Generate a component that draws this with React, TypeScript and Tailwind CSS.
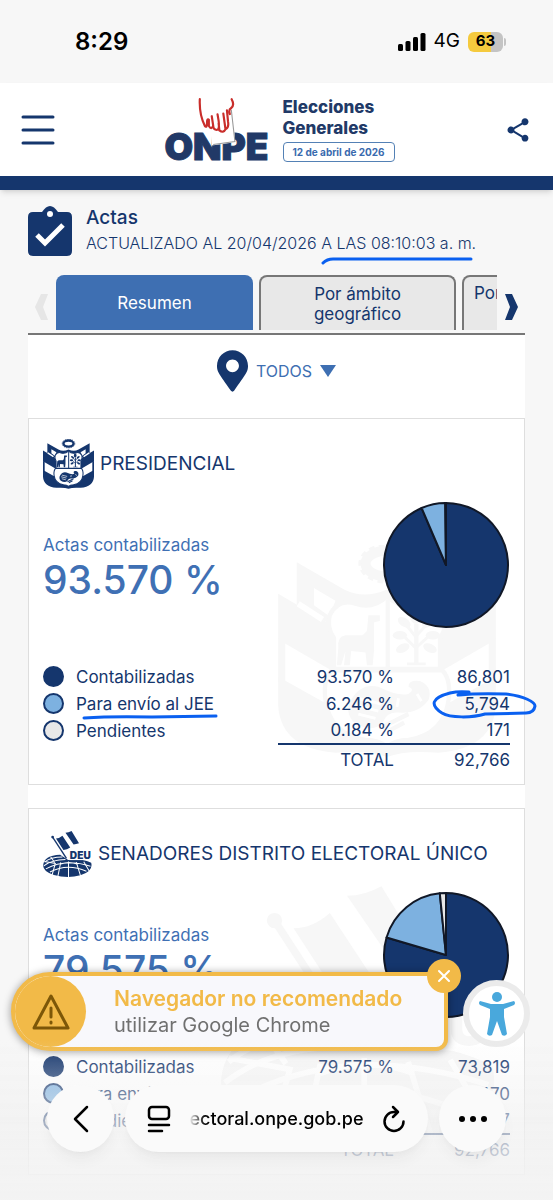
import { FaMapMarkerAlt } from "react-icons/fa";
import { MdShare } from "react-icons/md";

type Row = { label: string; percent: string; count: string; value: number; color: string };

const COLORS = { navy: "#15366d", sky: "#7db1e0", gray: "#e8e8e8" };

const PRESIDENCIAL: Row[] = [
    { label: "Contabilizadas", percent: "93.570 %", count: "86,801", value: 93.57, color: COLORS.navy },
    { label: "Para envío al JEE", percent: "6.246 %", count: "5,794", value: 6.246, color: COLORS.sky },
    { label: "Pendientes", percent: "0.184 %", count: "171", value: 0.184, color: COLORS.gray },
];

const SENADORES: Row[] = [
    { label: "Contabilizadas", percent: "79.575 %", count: "73,819", value: 79.575, color: COLORS.navy },
    { label: "Para envío al JEE", percent: "18.833 %", count: "17,470", value: 18.833, color: COLORS.sky },
    { label: "Pendientes", percent: "1.592 %", count: "1,477", value: 1.592, color: COLORS.gray },
];

const Crest = ({ className }: { className?: string }) => (
    <svg viewBox="0 0 152 148" className={className} fill="currentColor" aria-hidden="true">
        {/* Wreath */}
        <ellipse cx="76" cy="13" rx="15" ry="9" fill="none" stroke="currentColor" strokeWidth="7" />
        <ellipse cx="76" cy="13" rx="19" ry="13" fill="none" stroke="currentColor" strokeWidth="2" strokeDasharray="4 3" />
        {/* Flags */}
        <path d="M13 12 L46 31 Q60 38 76 31 Q92 38 106 31 L139 12 V42 L118 54 L34 54 L13 42Z" />
        <path d="M0 34 L34 54 Q42 64 38 88 L0 66Z M152 34 L118 54 Q110 64 114 88 L152 66Z" />
        <path d="M0 92 L36 112 V96 L76 134 L116 96 V112 L152 92 V112 Q150 142 112 145 Q88 143 76 148 Q64 143 40 145 Q2 142 0 112Z" />
        <path d="M0 64 L5 68 V96 H0Z M152 64 L147 68 V96 H152Z" />
        <path d="M14 41 L31 52 M138 41 L121 52" stroke="#fff" strokeWidth="4" />
        <path d="M25 30 L40 39 L36 50 L25 42Z M127 30 L112 39 L116 50 L127 42Z" fill="#fff" />
        {/* Shield */}
        <path
            d="M36 49 Q42 37 54 41 Q66 45 76 36 Q86 45 98 41 Q110 37 116 49 Q118 58 113 65 V86 Q121 92 119 108 Q116 132 91 136 Q81 136 76 141 Q71 136 61 136 Q36 132 33 108 Q31 92 39 86 V65 Q34 58 36 49Z"
            fill="#fff"
            stroke="currentColor"
            strokeWidth="3"
        />
        <path d="M75 38 H78 V85 H114 V89 H38 V85 H75Z" />
        {/* Vicuña */}
        <path d="M63 49 L71 49 V53 L67 54 V73 L66 84 H62 L61 75 L51 74 L50 84 H46 L47 74 L44 84 H41 L42 72 Q41 64 47 63 H59 L62 60Z" />
        {/* Cinchona tree */}
        <path d="M95 55 H98 V82 H103 V84 H90 V82 H95Z" />
        <g>
            <ellipse cx="96" cy="49" rx="4" ry="6" />
            <ellipse cx="88" cy="54" rx="5" ry="3" transform="rotate(35 88 54)" />
            <ellipse cx="105" cy="54" rx="5" ry="3" transform="rotate(-35 105 54)" />
            <ellipse cx="85" cy="63" rx="5" ry="3" />
            <ellipse cx="108" cy="63" rx="5" ry="3" />
            <ellipse cx="87" cy="72" rx="5" ry="3" transform="rotate(-25 87 72)" />
            <ellipse cx="106" cy="72" rx="5" ry="3" transform="rotate(25 106 72)" />
        </g>
        <path d="M86 62 L96 72 L107 62 M88 54 L96 64 L105 54" fill="none" stroke="currentColor" strokeWidth="2" />
        {/* Cornucopia */}
        <path d="M51 108 Q58 96 70 99 Q84 106 91 104 Q96 101 91 99 Q91 94 99 95 Q108 99 105 108 Q98 118 84 117 Q76 116 73 124 Q66 132 53 124 Q46 116 51 108Z" />
        <path d="M56 107 L72 111 M54 112 L70 116 M56 118 L68 121 M84 107 L83 113 M97 104 L100 109" stroke="#fff" strokeWidth="2" />
        <path d="M73 127 L91 118 M77 130 L88 124" stroke="currentColor" strokeWidth="3" />
    </svg>
);

const DeuLogo = ({ className }: { className?: string }) => (
    <svg viewBox="0 0 144 136" className={className} fill="currentColor" aria-hidden="true">
        {/* Hemicycle */}
        <path d="M0 102 Q2 72 50 70 L74 86 Q110 78 142 94 Q149 120 110 131 Q72 141 32 130 Q0 120 0 102Z" />
        <g fill="none" stroke="#fff" strokeWidth="3">
            <path d="M4 92 Q22 77 57 77 M2 103 Q26 84 66 84 M8 112 Q65 80 140 104 M20 121 Q72 94 128 119 M52 98 Q76 89 101 98" />
            <path d="M22 76 L34 93 M4 90 L36 96 L26 132 M52 93 L43 136 M75 90 V138 M98 92 L111 134 M120 91 L137 120" />
        </g>
        {/* Flag */}
        <circle cx="28" cy="18" r="4" />
        <path d="M28 18 L69 81" stroke="currentColor" strokeWidth="4" />
        <path d="M38 22 Q48 22 57 14 L80 49 Q71 56 60 56Z M66 5 Q75 5 84 0 L106 36 Q97 38 90 40Z" />
        <path d="M77 58 H142 V86 H77Z" fill="#fff" />
        <text x="79" y="83" fontFamily="Inter, sans-serif" fontSize="30" fontWeight="900">DEU</text>
    </svg>
);

const point = (share: number) => {
    const angle = (share / 100) * Math.PI * 2;
    return `${64 + 62 * Math.sin(angle)} ${64 - 62 * Math.cos(angle)}`;
};

const PieChart = ({ rows }: { rows: Row[] }) => {
    let start = 0;
    return (
        <svg viewBox="0 0 128 128" className="size-32" role="img" aria-label="Actas">
            {rows.map((row) => {
                const end = start + row.value;
                const d = `M64 64 L${point(start)} A62 62 0 ${row.value > 50 ? 1 : 0} 1 ${point(end)}Z`;
                start = end;
                return <path key={row.label} d={d} fill={row.color} stroke="#111827" strokeWidth="2" strokeLinejoin="round" />;
            })}
        </svg>
    );
};

type CardProps = { title: string; total: string; rows: Row[]; logo: React.ReactNode; watermark: React.ReactNode; marked?: boolean };

const ResultCard = ({ title, total, rows, logo, watermark, marked }: CardProps) => (
    <section className="relative border border-[#dedede] bg-white px-[14px] pt-5 pb-[9px]">
        {watermark}
        <div className="relative">
            <div className="flex h-[50px] items-center gap-[6px]">
                {logo}
                <h2 className="text-[19px] whitespace-nowrap">{title}</h2>
            </div>

            <div className="mt-3 flex justify-between">
                <div className="pt-8 text-[#3f70b4]">
                    <p className="text-[17px] leading-6">Actas contabilizadas</p>
                    <p className="text-[39px] leading-[46px] font-medium">{rows[0].percent}</p>
                </div>
                <PieChart rows={rows} />
            </div>

            <table className="mt-[34px] w-full border-collapse text-[17px] leading-6">
                <tbody>
                    {rows.map((row, index) => (
                        <tr key={row.label} className="h-[27px]">
                            <th scope="row" className="p-0 text-left font-normal">
                                <span className="flex items-center gap-3">
                                    <span
                                        className="size-[21px] rounded-full border-2 border-[#15366d]"
                                        style={{ backgroundColor: row.color }}
                                    />
                                    <span className="relative">
                                        {row.label}
                                        {marked && index === 1 && (
                                            <svg viewBox="0 0 136 6" className="absolute top-[22px] left-[6px] h-[6px] w-[136px]" aria-hidden="true">
                                                <path d="M2 4 Q30 2 70 3 L134 2" fill="none" stroke="#0a60f0" strokeWidth="3" strokeLinecap="round" />
                                            </svg>
                                        )}
                                    </span>
                                </span>
                            </th>
                            <td className="w-[116px] p-0 text-right">{row.percent}</td>
                            <td className="w-[116px] p-0 text-right">
                                <span className="relative">
                                    {row.count}
                                    {marked && index === 1 && (
                                        <svg viewBox="0 0 106 30" className="absolute -top-[4px] -right-7 h-[30px] w-[106px]" aria-hidden="true">
                                            <path
                                                d="M26 5 Q32 2 37 2 M27 5 Q45 3 74 4 C92 6 103 12 103 16 Q102 23 94 23 L53 24 C40 28 18 28 10 23 C-2 15 -1 8 18 3 Q26 1 37 2"
                                                fill="none"
                                                stroke="#0a60f0"
                                                strokeWidth="3"
                                                strokeLinecap="round"
                                            />
                                        </svg>
                                    )}
                                </span>
                            </td>
                        </tr>
                    ))}
                </tbody>
                <tfoot>
                    <tr className="h-[31px]">
                        <td />
                        <td className="border-t-2 border-[#15366d] p-0 text-right">TOTAL</td>
                        <td className="border-t-2 border-[#15366d] p-0 text-right">{total}</td>
                    </tr>
                </tfoot>
            </table>
        </div>
    </section>
);

const StatusBar = () => (
    <div className="flex h-[83px] items-center justify-between pr-[47px] pl-[75px] text-black">
        <span className="text-2xl font-semibold">8:29</span>
        <div className="flex items-center gap-2">
            <svg viewBox="0 0 28 18" className="h-[18px] w-7" aria-hidden="true">
                <rect x="0" y="11" width="5" height="7" rx="1.5" />
                <rect x="7.5" y="8" width="5" height="10" rx="1.5" />
                <rect x="15" y="4" width="5" height="14" rx="1.5" />
                <rect x="22.5" y="0" width="5" height="18" rx="1.5" />
            </svg>
            <span className="text-[19px]">4G</span>
            <div className="flex items-center gap-px">
                <span className="flex h-5 w-[35px] items-center justify-center rounded-md bg-linear-to-r from-[#f5ca3e] from-65% to-[#c4c4c4] to-65% text-[15px] font-bold">
                    63
                </span>
                <span className="h-2 w-[2px] rounded-r bg-[#c4c4c4]" />
            </div>
        </div>
    </div>
);

const Header = () => (
    <header className="flex h-[107px] items-center justify-between border-b-[14px] border-[#15366d] bg-white px-[21px] shadow-md">
        <button type="button" aria-label="Menú">
            <svg viewBox="0 0 34 30" className="h-[30px] w-[34px]" fill="none" stroke="currentColor" strokeWidth="3" strokeLinecap="round">
                <path d="M2 2 H32 M2 15 H32 M2 28 H32" />
            </svg>
        </button>
        <a href="#" className="flex items-center gap-[14px] text-[#213967]">
            <span className="relative flex h-[64px] items-end">
                <span className="text-[37px] leading-[30px] font-black [-webkit-text-stroke:1px]">ONPE</span>
                <svg viewBox="0 0 105 132" className="absolute top-0 left-[34px] h-[48px] w-[38px]" aria-hidden="true">
                    <path d="M35 94 L96 34 L103 122 L38 131Z" fill="#fff" />
                    <path d="M92 32 L102 120 L42 128" fill="none" stroke="#999" strokeWidth="3" />
                    <path
                        d="M5 3 Q3 45 19 77 Q25 84 25 67 Q25 55 30 60 V77 Q37 89 42 76 L38 50 M42 76 Q42 88 52 88 Q60 86 57 63 L54 45 M57 70 L59 89 Q70 98 76 86 L70 43 M76 86 Q86 82 83 65 L80 34 M93 3 Q102 20 91 28 Q84 32 88 44"
                        fill="none"
                        stroke="#c92e2b"
                        strokeWidth="6"
                        strokeLinecap="round"
                    />
                </svg>
            </span>
            <span className="flex flex-col">
                <span className="w-24 text-[17px] leading-[21px] font-extrabold">Elecciones Generales</span>
                <span className="mt-[3px] rounded-sm border border-[#5481b5] px-[9px] text-[10px] leading-[18px] font-bold text-[#396aae]">
                    12 de abril de 2026
                </span>
            </span>
        </a>
        <button type="button" aria-label="Compartir">
            <MdShare size={28} />
        </button>
    </header>
);

const Tabs = () => (
    <nav className="mt-[19px] flex items-center px-[7px]">
        <button type="button" aria-label="Anterior" className="w-[21px] text-[#e6e6e6]">
            <svg viewBox="0 0 14 26" className="mt-2 h-[26px] w-[14px]" fill="currentColor">
                <path d="M6 0 H13 L8 13 L13 26 H6 L0 13Z" />
            </svg>
        </button>
        <div className="flex h-[55px] min-w-0 flex-1 gap-[6px] overflow-hidden text-[17px] leading-5">
            <button type="button" className="w-[197px] shrink-0 rounded-t-lg bg-[#3e6fb2] text-white">Resumen</button>
            <button type="button" className="w-[197px] shrink-0 rounded-t-lg border-2 border-b-0 border-[#777] bg-[#e8e8e8] px-10">
                Por ámbito geográfico
            </button>
            <button type="button" className="flex w-[197px] shrink-0 rounded-t-lg border-2 border-b-0 border-[#777] bg-[#e8e8e8] px-[10px] pt-[6px]">
                Por
            </button>
        </div>
        <button type="button" aria-label="Siguiente" className="flex w-[21px] justify-end">
            <svg viewBox="0 0 14 26" className="mt-2 h-[26px] w-[14px]" fill="currentColor">
                <path d="M1 0 H8 L14 13 L8 26 H1 L6 13Z" />
            </svg>
        </button>
    </nav>
);

const BrowserToast = () => (
    <div className="fixed right-[105px] bottom-[149px] left-[11px] flex h-[79px] items-center gap-7 rounded-l-[40px] rounded-r-xl border-4 border-[#f2ba48] bg-[#f8f8fc] shadow-[0_1px_8px_#0006]">
        <span className="flex h-[71px] w-[71px] shrink-0 items-center justify-center rounded-full bg-[#f2ba48] text-[#7d5708]">
            <svg viewBox="0 0 38 36" className="h-9 w-[38px]" fill="none" stroke="currentColor" strokeWidth="3" strokeLinejoin="round" strokeLinecap="round">
                <path d="M19 2 L36 34 H2Z M19 14 V23 M19 28 V29" />
            </svg>
        </span>
        <p className="text-xl leading-[26px] whitespace-nowrap text-[#707070]">
            <strong className="block text-[21px] leading-[26px] font-semibold text-[#f2ba48]">Navegador no recomendado</strong>
            utilizar Google Chrome
        </p>
        <button
            type="button"
            aria-label="Cerrar"
            className="absolute -top-[17px] -right-[17px] flex size-[34px] items-center justify-center rounded-full bg-[#f2ba48] text-white"
        >
            <svg viewBox="0 0 14 14" className="size-[14px]" stroke="currentColor" strokeWidth="2" strokeLinecap="round">
                <path d="M2 2 L12 12 M12 2 L2 12" />
            </svg>
        </button>
    </div>
);

const AccessibilityButton = () => (
    <button
        type="button"
        aria-label="Accesibilidad"
        className="fixed right-[23px] bottom-[153px] flex size-[67px] items-center justify-center rounded-full border-[6px] border-[#ebebeb] bg-white text-[#49a8dc]"
    >
        <svg viewBox="0 0 38 46" className="h-[46px] w-[38px]" fill="currentColor">
            <circle cx="19" cy="6" r="5" />
            <path d="M2 10 L13 13 H25 L36 10 Q38 12 36 14 L26 18 V26 L29 43 Q27 46 24 44 L19 30 L14 44 Q11 46 9 43 L12 26 V18 L2 14 Q0 12 2 10Z" />
        </svg>
    </button>
);

const BrowserBar = () => (
    <div className="fixed inset-x-0 bottom-0 flex h-40 items-end gap-[11px] bg-linear-to-b from-[#f2f2f2]/0 via-[#f0f0f0]/65 to-[#f3f3f3] px-[47px] pb-12 text-black">
        <button type="button" aria-label="Atrás" className="flex size-[67px] items-center justify-center rounded-full bg-[#fafafa] shadow-lg shadow-black/5">
            <svg viewBox="0 0 16 28" className="h-7 w-4" fill="none" stroke="currentColor" strokeWidth="2.5" strokeLinecap="round" strokeLinejoin="round">
                <path d="M14 2 L2 14 L14 26" />
            </svg>
        </button>
        <div className="flex h-[67px] flex-1 items-center justify-between rounded-full bg-[#fafafa] px-[22px] shadow-lg shadow-black/5">
            <button type="button" aria-label="Página">
                <svg viewBox="0 0 24 28" className="h-7 w-6" fill="none" stroke="currentColor" strokeWidth="2.5" strokeLinecap="round">
                    <rect x="2" y="2" width="20" height="12" rx="3" />
                    <path d="M2 20 H22 M2 26 H15" />
                </svg>
            </button>
            <span className="text-lg font-medium [mask-image:linear-gradient(to_right,transparent,black_16px)]">ectoral.onpe.gob.pe</span>
            <button type="button" aria-label="Recargar">
                <svg viewBox="0 0 24 28" className="h-7 w-6" fill="none" stroke="currentColor" strokeWidth="2.5" strokeLinecap="round" strokeLinejoin="round">
                    <path d="M16 7 H12 A9.5 9.5 0 1 0 21.5 16.5 M11 2 L16 7 L11 12" />
                </svg>
            </button>
        </div>
        <button type="button" aria-label="Más" className="flex size-[67px] items-center justify-center gap-[5px] rounded-full bg-[#fafafa] shadow-lg shadow-black/5">
            <span className="size-[6px] rounded-full bg-black" />
            <span className="size-[6px] rounded-full bg-black" />
            <span className="size-[6px] rounded-full bg-black" />
        </button>
    </div>
);

const App = () => {
    return (
        <div className="min-h-screen bg-[#f7f7f7] font-['Inter','Liberation_Sans',sans-serif] text-[#15366d]">
            <StatusBar />
            <Header />

            <main className="px-7 pt-4 pb-[25px]">
                <div className="flex items-center gap-[14px]">
                    <svg viewBox="0 0 44 50" className="h-[50px] w-11" fill="currentColor" aria-hidden="true">
                        <path d="M5 6 H14 Q18 0 22 0 Q26 0 30 6 H39 Q44 6 44 11 V45 Q44 50 39 50 H5 Q0 50 0 45 V11 Q0 6 5 6Z" />
                        <circle cx="22" cy="8" r="3" fill="#fff" />
                        <path d="M9 29 L17 37 L35 19" fill="none" stroke="#fff" strokeWidth="5" />
                    </svg>
                    <div>
                        <h1 className="text-[19px] leading-6 font-medium">Actas</h1>
                        <p className="text-base leading-[26px] font-light whitespace-nowrap">
                            ACTUALIZADO AL 20/04/2026{" "}
                            <span className="relative">
                                A LAS 08:10:03 a. m.
                                <svg viewBox="0 0 152 8" className="absolute top-6 left-0 h-2 w-[152px]" aria-hidden="true">
                                    <path d="M2 6 Q6 2 12 2 H150" fill="none" stroke="#0a60f0" strokeWidth="3" strokeLinecap="round" />
                                </svg>
                            </span>
                        </p>
                    </div>
                </div>

                <Tabs />

                <div className="mt-[3px] border-t-2 border-[#777] bg-white">
                    <div className="flex h-[83px] items-center justify-center pb-3">
                        <button type="button" className="flex items-center gap-2">
                            <FaMapMarkerAlt className="h-[42px] w-[31px]" />
                            <span className="text-base text-[#3e6fb2]">TODOS</span>
                            <svg viewBox="0 0 16 12" className="h-3 w-4 text-[#3e6fb2]" fill="currentColor">
                                <path d="M0 0 H16 L8 12Z" />
                            </svg>
                        </button>
                    </div>

                    <div className="flex flex-col gap-[23px]">
                        <ResultCard
                            title="PRESIDENCIAL"
                            total="92,766"
                            rows={PRESIDENCIAL}
                            logo={<Crest className="h-[50px] w-[51px]" />}
                            watermark={<Crest className="absolute right-7 bottom-[27px] h-[212px] w-[218px] text-[#f7f7f7]" />}
                            marked
                        />
                        <ResultCard
                            title="SENADORES DISTRITO ELECTORAL ÚNICO"
                            total="92,766"
                            rows={SENADORES}
                            logo={<DeuLogo className="h-[46px] w-[49px]" />}
                            watermark={<DeuLogo className="absolute right-7 bottom-[27px] h-[262px] w-[275px] text-[#f7f7f7]" />}
                        />
                    </div>
                </div>
            </main>

            <AccessibilityButton />
            <BrowserToast />
            <BrowserBar />
        </div>
    );
};

export default App;
